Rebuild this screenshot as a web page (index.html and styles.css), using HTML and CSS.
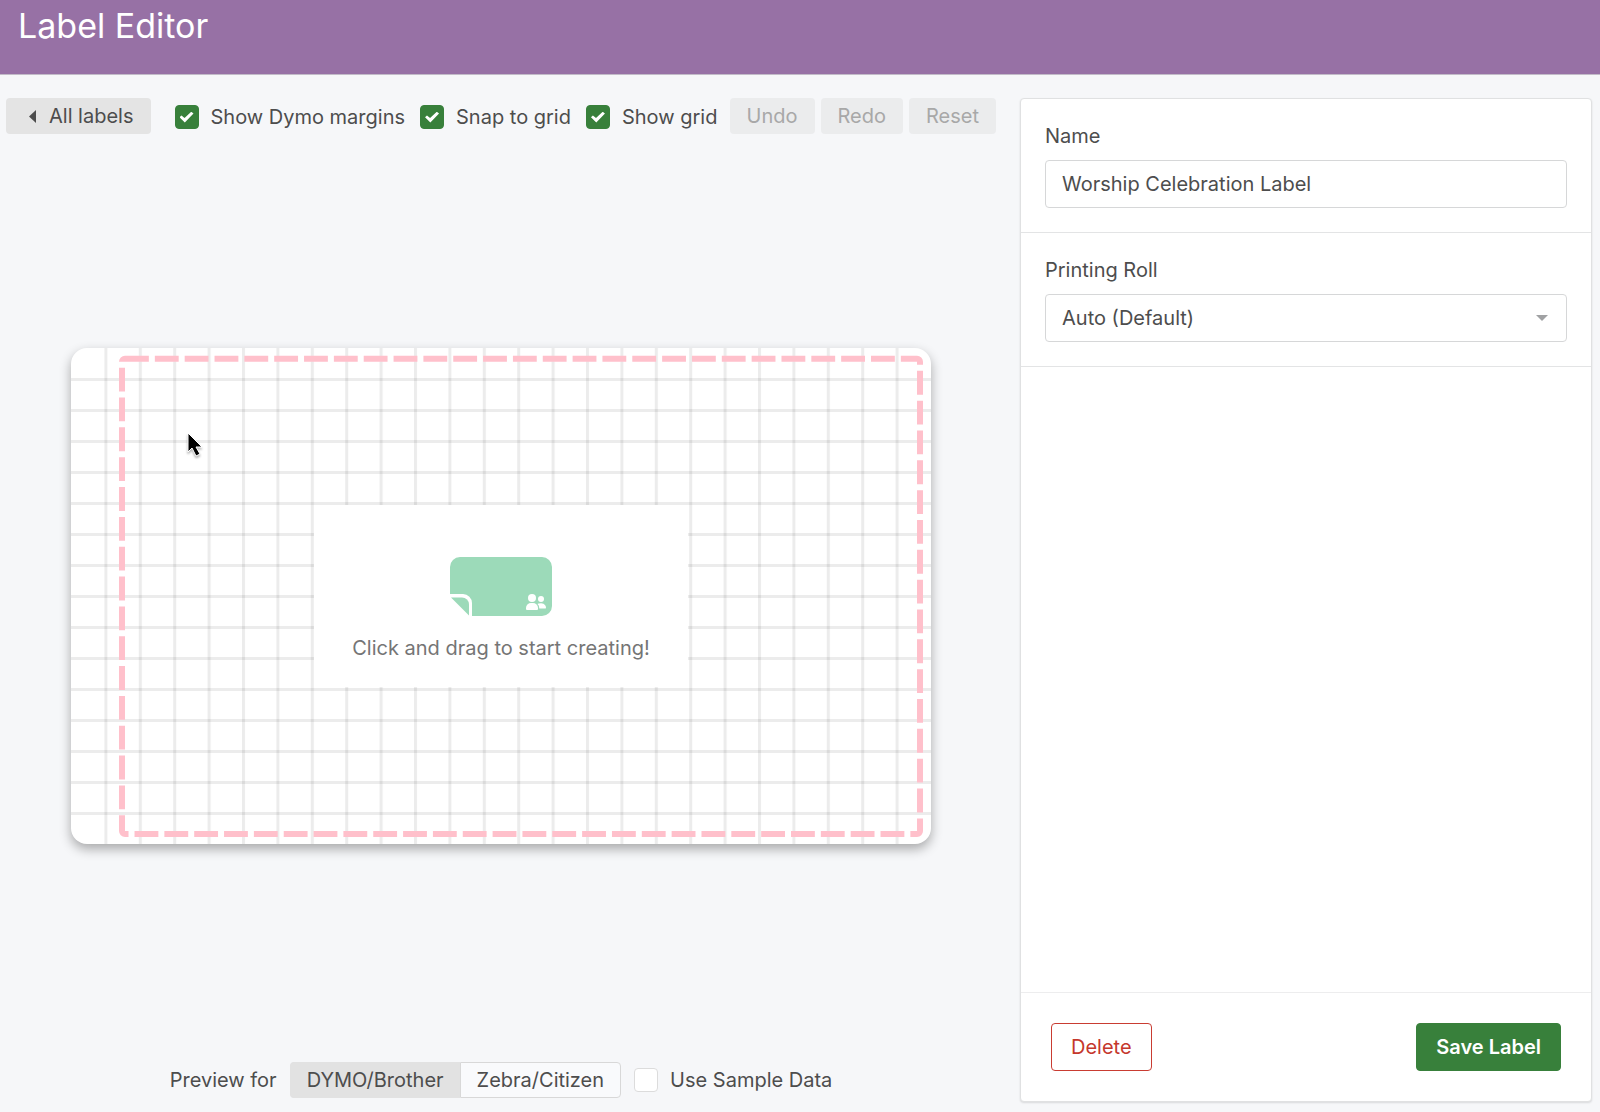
FILE: index.html
```html
<!DOCTYPE html>
<html lang="en">
<head>
<meta charset="utf-8">
<meta name="viewport" content="width=device-width, initial-scale=1">
<title>Label Editor</title>
<link rel="stylesheet" href="styles.css">
</head>
<body>
<header class="header"><h1 class="title">Label Editor</h1></header>
<div class="editor">
  <main class="workspace">
    <div class="toolbar">
      <button class="button button-back" type="button">
        <svg class="back-icon" viewBox="0 0 7 13" aria-hidden="true"><path d="M7 0v13L0 6.500z" fill="currentColor"/></svg>
        All labels
      </button>
      <div class="options">
        <label class="option"><input class="check" type="checkbox" checked>Show Dymo margins</label>
        <label class="option"><input class="check" type="checkbox" checked>Snap to grid</label>
        <label class="option"><input class="check" type="checkbox" checked>Show grid</label>
      </div>
      <div class="history">
        <button class="button" type="button" disabled>Undo</button>
        <button class="button" type="button" disabled>Redo</button>
        <button class="button" type="button" disabled>Reset</button>
      </div>
    </div>

    <div class="stage">
      <div class="canvas">
        <svg class="canvas-grid" viewBox="0 0 860 496" aria-hidden="true">
          <defs>
            <pattern id="columns" width="34.4" height="496" patternUnits="userSpaceOnUse"><path d="M1.500 0v496" stroke="#000" stroke-opacity=".075" stroke-width="3"/></pattern>
            <pattern id="rows" width="860" height="31" patternUnits="userSpaceOnUse"><path d="M0 1.500h860" stroke="#000" stroke-opacity=".075" stroke-width="3"/></pattern>
          </defs>
          <g transform="translate(-1 -1)">
            <rect x="20" width="840" height="497" fill="url(#columns)"/>
            <rect y="20" width="861" height="476" fill="url(#rows)"/>
          </g>
          <rect x="51" y="10.7" width="798" height="475.300" rx="3" fill="none" stroke="#ffc0cb" stroke-width="6" stroke-dasharray="23.840 6"/>
        </svg>
        <div class="empty">
          <svg class="empty-icon" viewBox="0 0 102 59" aria-hidden="true">
            <path d="M10 0H92a10 10 0 0 1 10 10V49a10 10 0 0 1-10 10H22V46a9 9 0 0 0-9-9H0V10A10 10 0 0 1 10 0z" fill="#9cdab9"/>
            <path d="M1 40.500H12a7 7 0 0 1 7 7V58.500z" fill="#9cdab9"/>
            <g fill="#fff">
              <circle cx="82" cy="41" r="4"/>
              <path d="M76 52v-1a5 5 0 0 1 5-5h2a5 5 0 0 1 5 5v1q0 1-1 1H77q-1 0-1-1z"/>
              <circle cx="91" cy="42" r="3"/>
              <path d="M88.500 46.500q5-1 6.500 1.500 1 1 1 3-.300.500-1 .500H89.300q0-3-1.800-4.400z"/>
            </g>
          </svg>
          <p class="empty-text">Click and drag to start creating!</p>
        </div>
        <svg class="cursor" viewBox="0 0 18 26" aria-hidden="true"><path d="M1 1v19l4-4 4 8 4-2-4-7h6z" fill="#000" stroke="#fff" stroke-width="1"/></svg>
      </div>
    </div>

    <div class="preview">
      <span>Preview for</span>
      <div class="segments">
        <button class="segment segment-active" type="button" aria-pressed="true">DYMO/Brother</button>
        <button class="segment" type="button" aria-pressed="false">Zebra/Citizen</button>
      </div>
      <label class="option"><input class="check" type="checkbox">Use Sample Data</label>
    </div>
  </main>

  <aside class="panel">
    <div class="field">
      <label for="name">Name</label>
      <input class="control" id="name" type="text" value="Worship Celebration Label">
    </div>
    <div class="field">
      <label for="roll">Printing Roll</label>
      <div class="select">
        <select class="control" id="roll"><option>Auto (Default)</option></select>
      </div>
    </div>
    <div class="panel-footer">
      <button class="action action-delete" type="button">Delete</button>
      <button class="action action-save" type="button">Save Label</button>
    </div>
  </aside>
</div>
</body>
</html>
```
FILE: styles.css
```css
* { box-sizing: border-box; }

body {
  display: flex;
  flex-direction: column;
  min-height: 100vh;
  margin: 0;
  background: #f6f7f9;
  color: #4d4d4d;
  font: 20px/24px Inter, "Liberation Sans", sans-serif;
}

button, input, select { font: inherit; color: inherit; }

.header {
  height: 75px;
  padding: 4px 18px;
  background: #9771a5;
  border-bottom: 1px solid #c2bbc8;
}

.title {
  margin: 0;
  color: #fff;
  font-size: 34px;
  font-weight: 400;
  line-height: 44px;
}

.editor {
  flex: 1;
  display: grid;
  grid-template-columns: minmax(0, 990fr) minmax(0, 572fr);
  gap: 24px;
  padding: 23px 8px 10px 6px;
}

.workspace {
  display: flex;
  flex-direction: column;
}

.toolbar, .options, .history, .option, .preview {
  display: flex;
  align-items: center;
  white-space: nowrap;
}

.options {
  gap: 15px;
  margin-left: 24px;
  padding-top: 2px;
}

.history {
  gap: 6px;
  margin-left: auto;
}

.option { gap: 12px; }

.button {
  display: flex;
  align-items: center;
  height: 36px;
  padding: 0 17px;
  border: 0;
  border-radius: 4px;
  background: #e4e4e4;
}

.button:disabled {
  background: #ebeced;
  color: #a8a8a8;
}

.button-back {
  gap: 13px;
  padding-left: 23px;
}

.back-icon { width: 7px; height: 13px; }

.check {
  appearance: none;
  display: grid;
  place-items: center;
  flex: none;
  width: 24px;
  height: 24px;
  margin: 0;
  border: 1px solid #dcdcdc;
  border-radius: 4px;
  background: #fff;
}

.check:checked {
  border-color: #38803b;
  background: #38803b;
}

.check:checked::before {
  content: "";
  width: 14px;
  height: 11px;
  background: #fff;
  clip-path: polygon(0 53%, 14% 36%, 36% 60%, 84% 2%, 100% 18%, 38% 100%);
}

.stage {
  flex: 1;
  display: grid;
  place-items: center;
  padding: 0 65px 4px;
}

.canvas {
  position: relative;
  display: grid;
  place-items: center;
  width: 100%;
  border-radius: 16px;
  background: #fff;
  box-shadow: 0 5px 12px rgba(0, 0, 0, .32);
}

.canvas-grid {
  grid-area: 1 / 1;
  display: block;
  width: 100%;
}

.empty {
  grid-area: 1 / 1;
  z-index: 1;
  display: flex;
  flex-direction: column;
  align-items: center;
  gap: 20px;
  padding: 52px 38px 27px;
  background: #fff;
}

.empty-icon { width: 102px; height: 59px; }

.empty-text {
  margin: 0;
  color: #757575;
}

.cursor {
  position: absolute;
  z-index: 2;
  left: 116px;
  top: 84px;
  width: 18px;
  height: 26px;
  filter: drop-shadow(0 2px 1px rgba(0, 0, 0, .3));
}

.preview {
  justify-content: center;
  gap: 13px;
  padding-bottom: 4px;
}

.segments { display: flex; }

.segment {
  height: 36px;
  padding: 0 16px;
  border: 1px solid #d8d8d8;
  border-radius: 0 4px 4px 0;
  background: #f9fafc;
}

.segment-active {
  border-color: #e2e2e2;
  border-right: 0;
  border-radius: 4px 0 0 4px;
  background: #e2e2e2;
}

.panel {
  display: flex;
  flex-direction: column;
  border: 1px solid #e0e1e2;
  border-radius: 4px;
  background: #fff;
  box-shadow: 0 1px 2px rgba(0, 0, 0, .12);
}

.field {
  display: flex;
  flex-direction: column;
  gap: 12px;
  padding: 25px 24px 24px;
  border-bottom: 1px solid #e3e4e5;
}

.control {
  appearance: none;
  width: 100%;
  height: 48px;
  padding: 0 16px;
  border: 1px solid #d6d7d8;
  border-radius: 4px;
  background: #fff;
}

.select { position: relative; }

.select::after {
  content: "";
  position: absolute;
  right: 19px;
  top: 21px;
  width: 12px;
  height: 6px;
  background: #a0a1a3;
  clip-path: polygon(0 0, 100% 0, 50% 100%);
  pointer-events: none;
}

.panel-footer {
  display: flex;
  justify-content: space-between;
  margin-top: auto;
  padding: 30px;
  border-top: 1px solid #ededee;
}

.action {
  height: 48px;
  padding: 0 19px;
  border: 1px solid #c93c32;
  border-radius: 4px;
  background: #fff;
}

.action-delete { color: #c5372c; }

.action-save {
  border-color: #38803b;
  background: #38803b;
  color: #fff;
  font-weight: 600;
}
```
